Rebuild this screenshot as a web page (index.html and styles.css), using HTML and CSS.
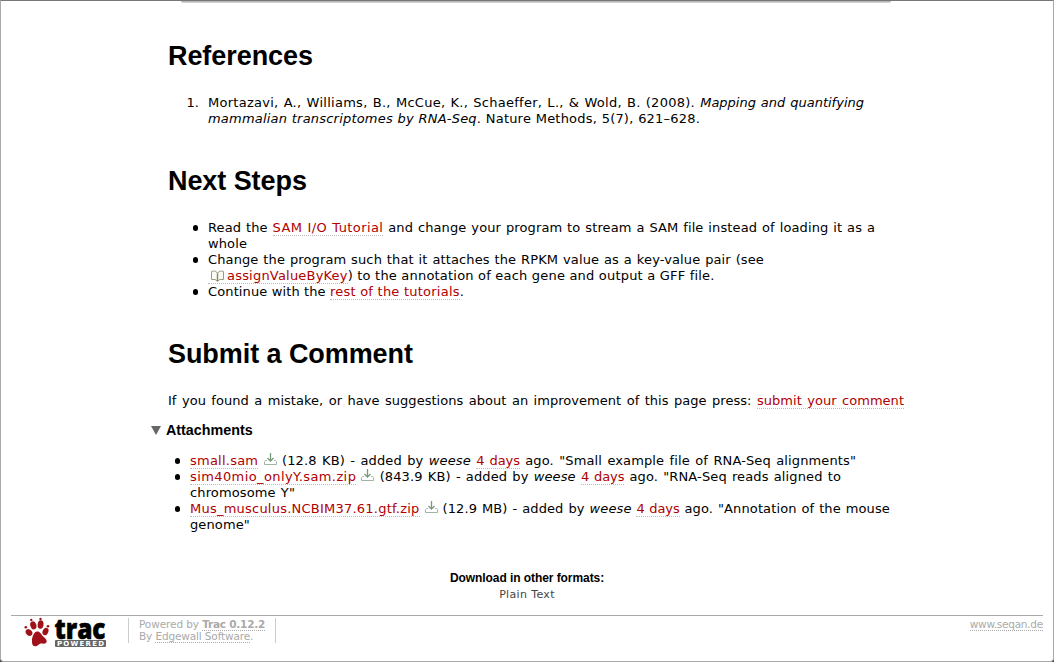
FILE: index.html
```html
<!DOCTYPE html>
<html lang="en">
<head>
<meta charset="utf-8">
<title>SeqAn Tutorial</title>
<link rel="stylesheet" href="styles.css">
</head>
<body>
<svg width="0" height="0" class="defs">
  <symbol id="download" viewBox="0 0 13 12"><path d="M3 7.500H1.500L.5 8.500v3h12v-3l-1-1H10" fill="none" stroke="#a3b3a5"/><path d="M6.500 0v8M3.500 5l3 3 3-3" fill="none" stroke="#789a7c" stroke-width="1.300"/></symbol>
</svg>
<div class="window">
  <div class="panel-edge"></div>
  <main class="content">
    <h1>References</h1>
    <ol class="list">
      <li><div>
        <span class="line w656">Mortazavi, A., Williams, B., McCue, K., Schaeffer, L., &amp; Wold, B. (2008). <em>Mapping and quantifying</em></span>
        <span class="line w492"><em>mammalian transcriptomes by RNA-Seq</em>. Nature Methods, 5(7), 621–628.</span>
      </div></li>
    </ol>
    <h1>Next Steps</h1>
    <ul class="list">
      <li><div>
        <span class="line w667">Read the <a class="wider">SAM I/O Tutorial</a> and change your program to stream a SAM file instead of loading it as a</span>
        <span class="line w39">whole</span>
      </div></li>
      <li><div>
        <span class="line w556">Change the program such that it attaches the RPKM value as a key-value pair (see</span>
        <span class="line w504"><a><svg class="book" viewBox="0 0 13 12"><path d="M.5 1.500V9.500h3.500l2.500 1.500L9 9.500h3.500V1.500C9.500.5 7.500 1 6.500 3.500 5.500 1 3.500.5.5 1.500z" fill="#fbfbf6" stroke="#989c80"/><path d="M6.500 3.500v8" stroke="#83876b" stroke-width="1.400"/></svg>assignValueByKey</a>) to the annotation of each gene and output a GFF file.</span>
      </div></li>
      <li><div><span class="line w257">Continue with the <a class="wide">rest of the tutorials</a>.</span></div></li>
    </ul>
    <h1>Submit a Comment</h1>
    <p class="line w736">If you found a mistake, or have suggestions about an improvement of this page press: <a>submit your comment</a></p>
  </main>
  <section class="attachments">
    <h2><i class="triangle"></i>Attachments</h2>
    <ul>
      <li><div><span class="line w666"><a class="wide">small.sam</a> <svg class="dl"><use href="#download"/></svg> (12.8 KB) - added by <em>weese</em> <a class="days">4 days</a> ago. "Small example file of RNA-Seq alignments"</span></div></li>
      <li><div>
        <span class="line w651"><a class="wider">sim40mio_onlyY.sam.zip</a> <svg class="dl"><use href="#download"/></svg> (843.9 KB) - added by <em>weese</em> <a class="days">4 days</a> ago. "RNA-Seq reads aligned to</span>
        <span class="line w104">chromosome Y"</span>
      </div></li>
      <li><div>
        <span class="line w700"><a class="wide">Mus_musculus.NCBIM37.61.gtf.zip</a> <svg class="dl"><use href="#download"/></svg> (12.9 MB) - added by <em>weese</em> <a class="days">4 days</a> ago. "Annotation of the mouse</span>
        <span class="line w59">genome"</span>
      </div></li>
    </ul>
  </section>
  <section class="formats">
    <h3>Download in other formats:</h3>
    <div>Plain Text</div>
  </section>
  <footer>
    <svg class="logo" viewBox="0 0 84 32">
      <g fill="#a01219">
        <ellipse cx="5" cy="15.500" rx="2.900" ry="3.800" transform="rotate(-42 5 15.500)"/>
        <ellipse cx="9.300" cy="8.300" rx="3" ry="4.100" transform="rotate(-18 9.300 8.300)"/>
        <ellipse cx="16.600" cy="7.500" rx="2.900" ry="4.300" transform="rotate(6 16.600 7.500)"/>
        <ellipse cx="21.500" cy="14.500" rx="2.800" ry="3.900" transform="rotate(24 21.500 14.500)"/>
        <circle cx="1.800" cy="10.300" r="1.300"/><circle cx="7.300" cy="3" r="1.200"/><circle cx="16.500" cy="2" r="1.200"/><circle cx="24" cy="9.300" r="1.300"/>
        <path d="M13 14.500c3-.2 4 2.500 5.700 4.500 2.800 2.500 5.300 4.500 3.300 7-1.800 1.500-4.500.2-6 .7-1.800.7-2.500 2.700-5 2.500-3-.4-3-3.300-3-5.500-.2-3 2-9 5-9.200z"/>
      </g>
      <text class="trac" x="30.500" y="22" textLength="51" lengthAdjust="spacingAndGlyphs">trac</text>
      <rect x="31" y="23" width="51" height="7" rx="1" fill="#666"/>
      <text class="powered" x="33" y="29" textLength="47">POWERED</text>
    </svg>
    <div class="powered-by">
      <div class="line w126">Powered by <a><b>Trac 0.12.2</b></a></div>
      <div class="line w113">By <a>Edgewall Software</a>.</div>
    </div>
    <a class="site">www.seqan.de</a>
  </footer>
</div>
</body>
</html>
```
FILE: styles.css
```css
* { box-sizing: border-box; }
body { margin: 0; background: #444; color: #000; font: 13px/16px "DejaVu Sans", sans-serif; }
.defs { display: block; }
.window { height: 662px; background: #fff; border: 1px solid #aaa; border-top-color: #777; border-radius: 0 0 4px 4px; }
.panel-edge { width: 710px; height: 2px; margin-left: 180px; background: linear-gradient(#aaa, #ddd); border-radius: 0 0 3px 3px; }
.content { padding-left: 167px; }
h1 { margin: 0; padding-top: 37px; height: 92px; font: bold 27px/32px "Liberation Sans", Arial, sans-serif; letter-spacing: -.07px; }
.list + h1 { height: 93px; padding-top: 38px; }
ul, ol { margin: 0; padding: 0; list-style: none; }
li { display: grid; grid-template-columns: 40px 1fr; }
ul > li::before { content: ""; width: 5.500px; height: 5.500px; margin: 5px 0 0 24.500px; border-radius: 50%; background: #000; }
ol > li::before { content: "1."; padding-left: 18.500px; }
p { margin: 0; }
.line { display: block; white-space: nowrap; text-align: justify; text-align-last: justify; letter-spacing: .12px; }
.w656 { width: 656px; letter-spacing: .27px; } .w492 { width: 492px; letter-spacing: .2px; }
.w656 em { letter-spacing: 0; }
.w667 { width: 667px; } .w39 { width: 39px; } .w556 { width: 556px; }
.w504 { width: 504px; letter-spacing: .2px; } .w257 { width: 256px; }
.w736 { width: 736px; letter-spacing: .03px; } .w666 { width: 666px; }
.w651 { width: 651px; } .w104 { width: 105px; } .w700 { width: 700px; }
.w59 { width: 59px; } .w126 { width: 126px; letter-spacing: -.1px; } .w113 { width: 113px; letter-spacing: -.13px; }
a { color: #b00000; border-bottom: 1px dotted #bbb; }
.wide { letter-spacing: .23px; }
.wider { letter-spacing: .4px; }
.days { letter-spacing: -.1px; }
.book { width: 13px; height: 12px; margin: 0 3px; vertical-align: -2px; }
.attachments { padding-left: 149px; }
h2 { display: flex; align-items: center; gap: 5px; margin: 12px 0 14px; padding-left: 1px; font: bold 14.300px/18px "Liberation Sans", Arial, sans-serif; }
.triangle { border: 5px solid transparent; border-top: 9px solid #666; border-bottom: 0; }
.dl { width: 13px; height: 12px; vertical-align: 0; }
.formats { margin-top: 37px; text-align: center; font-size: 11px; line-height: 17px; letter-spacing: .35px; color: #444; }
h3 { margin: 0; color: #000; font: bold 12px/16px "Liberation Sans", Arial, sans-serif; letter-spacing: -.07px; }
footer { display: flex; margin: 12px 10px 0; border-top: 1px solid #aaa; color: #aaa; font-size: 10.500px; line-height: 12px; }
footer a { color: #aaa; border-bottom-color: #aaa; }
footer b { letter-spacing: -.25px; }
.logo { width: 84px; height: 32px; margin: 1px 0 0 13px; overflow: visible; }
.trac { font: 800 29px "Open Sans", sans-serif; fill: #000; stroke: #000; stroke-width: .6px; }
.powered { font: bold 7px "DejaVu Sans", sans-serif; fill: #fff; }
.powered-by { width: 148px; height: 25px; margin: 2px 0 0 20px; padding-left: 10px; border: solid #ccc; border-width: 0 1px; }
.site { margin: 2px 0 0 auto; height: 13px; letter-spacing: -.25px; }
```
